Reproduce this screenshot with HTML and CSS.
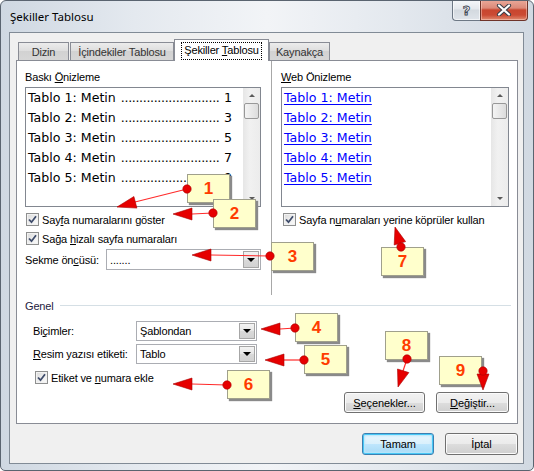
FILE: index.html
```html
<!DOCTYPE html>
<html lang="tr">
<head>
<meta charset="utf-8">
<title>Şekiller Tablosu</title>
<link rel="stylesheet" href="styles.css">
</head>
<body>
<div class="window">
  <div class="titlebar">
    <span class="title">Şekiller Tablosu</span>
    <div class="caption">
      <div class="cap-help">?</div>
      <div class="cap-close">
        <svg width="16" height="12" viewBox="0 0 16 12">
          <path d="M3 1.5 L13 10.5 M13 1.5 L3 10.5" stroke="#3a3f48" stroke-width="4.2" stroke-linecap="round" fill="none"/>
          <path d="M3 1.5 L13 10.5 M13 1.5 L3 10.5" stroke="#ffffff" stroke-width="2.2" stroke-linecap="round" fill="none"/>
        </svg>
      </div>
    </div>
  </div>

  <div class="client">
    <div class="tabs">
      <div class="tab t-dizin">Dizin</div>
      <div class="tab t-ic">İçindekiler Tablosu</div>
      <div class="tab t-sek active"><span class="focus">Şekiller <u>T</u>ablosu</span></div>
      <div class="tab t-kay">Kaynakça</div>
    </div>

    <div class="panel">
      <div class="previews">
        <div class="col col-left">
          <div class="label">Baskı <u>Ö</u>nizleme</div>
          <div class="listbox">
            <div class="items">
              <div class="item"><span>Tablo 1: Metin</span><span class="dots">...........................</span><span class="num">1</span></div>
              <div class="item"><span>Tablo 2: Metin</span><span class="dots">...........................</span><span class="num">3</span></div>
              <div class="item"><span>Tablo 3: Metin</span><span class="dots">...........................</span><span class="num">5</span></div>
              <div class="item"><span>Tablo 4: Metin</span><span class="dots">...........................</span><span class="num">7</span></div>
              <div class="item"><span>Tablo 5: Metin</span><span class="dots">...........................</span><span class="num">9</span></div>
            </div>
            <div class="scrollbar">
              <div class="sb-btn"><i class="tri-up"></i></div>
              <div class="sb-thumb"></div>
              <div class="sb-track"></div>
              <div class="sb-btn"><i class="tri-down"></i></div>
            </div>
          </div>
          <div class="check-row first">
            <span class="cb"><svg width="11" height="11" viewBox="0 0 11 11"><path d="M2 5.5 L4.5 8.2 L9 2.3" fill="none" stroke="#3f4c6b" stroke-width="1.8"/></svg></span>
            <span>Say<u>f</u>a numaralarını göster</span>
          </div>
          <div class="check-row">
            <span class="cb"><svg width="11" height="11" viewBox="0 0 11 11"><path d="M2 5.5 L4.5 8.2 L9 2.3" fill="none" stroke="#3f4c6b" stroke-width="1.8"/></svg></span>
            <span>Sağa <u>h</u>izalı sayfa numaraları</span>
          </div>
          <div class="sekme-row">
            <span>Sekme ön<u>c</u>üsü:</span>
            <div class="combo combo-sekme"><span class="combo-text">.......</span><span class="combo-btn"><i class="tri-down dark"></i></span></div>
          </div>
        </div>

        <div class="vsep"></div>

        <div class="col col-right">
          <div class="label"><u>W</u>eb Önizleme</div>
          <div class="listbox">
            <div class="items">
              <div class="item link">Tablo 1: Metin</div>
              <div class="item link">Tablo 2: Metin</div>
              <div class="item link">Tablo 3: Metin</div>
              <div class="item link">Tablo 4: Metin</div>
              <div class="item link">Tablo 5: Metin</div>
            </div>
            <div class="scrollbar">
              <div class="sb-btn"><i class="tri-up"></i></div>
              <div class="sb-thumb"></div>
              <div class="sb-track"></div>
              <div class="sb-btn"><i class="tri-down"></i></div>
            </div>
          </div>
          <div class="check-row first right">
            <span class="cb"><svg width="11" height="11" viewBox="0 0 11 11"><path d="M2 5.5 L4.5 8.2 L9 2.3" fill="none" stroke="#3f4c6b" stroke-width="1.8"/></svg></span>
            <span>Sayfa n<u>u</u>maraları yerine köprüler kullan</span>
          </div>
        </div>
      </div>

      <div class="genel">
        <div class="genel-head"><span class="genel-label">Genel</span><span class="genel-line"></span></div>
        <div class="field-row r1">
          <span class="lbl">Bi<u>ç</u>imler:</span>
          <div class="combo combo-gen"><span class="combo-text">Şablondan</span><span class="combo-btn"><i class="tri-down dark"></i></span></div>
        </div>
        <div class="field-row r2">
          <span class="lbl"><u>R</u>esim yazısı etiketi:</span>
          <div class="combo combo-gen"><span class="combo-text">Tablo</span><span class="combo-btn"><i class="tri-down dark"></i></span></div>
        </div>
        <div class="check-row etiket">
          <span class="cb"><svg width="11" height="11" viewBox="0 0 11 11"><path d="M2 5.5 L4.5 8.2 L9 2.3" fill="none" stroke="#3f4c6b" stroke-width="1.8"/></svg></span>
          <span>Etiket ve <u>n</u>umara ekle</span>
        </div>
        <div class="btn-row">
          <button class="btn b-secenek"><u>S</u>eçenekler...</button>
          <button class="btn b-degis"><u>D</u>eğiştir...</button>
        </div>
      </div>
    </div>

    <div class="footer">
      <button class="btn default b-tamam">Tamam</button>
      <button class="btn b-iptal">İptal</button>
    </div>
  </div>

  <div class="overlay">
    <div class="callout c1">1</div>
    <div class="callout c2">2</div>
    <div class="callout c3">3</div>
    <div class="callout c4">4</div>
    <div class="callout c5">5</div>
    <div class="callout c6">6</div>
    <div class="callout c7">7</div>
    <div class="callout c8">8</div>
    <div class="callout c9">9</div>
    <svg class="arrows" width="534" height="471" viewBox="0 0 534 471">
      <g stroke="#ff2a2a" stroke-width="1.2" fill="none">
        <line x1="187" y1="189" x2="135" y2="202"/>
        <line x1="213" y1="213" x2="192" y2="214"/>
        <line x1="270" y1="256" x2="211" y2="255"/>
        <line x1="295" y1="328" x2="280" y2="329"/>
        <line x1="304" y1="360" x2="284" y2="360"/>
        <line x1="227" y1="385" x2="192" y2="384"/>
        <line x1="407" y1="359" x2="403" y2="371"/>
      </g>
      <g fill="#e60000" stroke="#a80000" stroke-width="0.6">
        <polygon points="117,207 133.9,196.5 136.9,208.1"/>
        <polygon points="173,214 192,208 192,220"/>
        <polygon points="192,255 211,249 211,261"/>
        <polygon points="261,329 280,323 280,335"/>
        <polygon points="265,360 284,354 284,366"/>
        <polygon points="173,384 192,378 192,390"/>
        <polygon points="395,227 405.6,241.6 394.2,245"/>
        <polygon points="398,387 397.5,369 408.9,372.6"/>
        <polygon points="483,390 477,374 489,374"/>
        <circle cx="187" cy="189" r="4.2"/>
        <circle cx="213" cy="213" r="4.2"/>
        <circle cx="270" cy="256" r="4.2"/>
        <circle cx="295" cy="328" r="4.2"/>
        <circle cx="304" cy="360" r="4.2"/>
        <circle cx="227" cy="385" r="4.2"/>
        <circle cx="401" cy="247" r="4.2"/>
        <circle cx="407" cy="359" r="4.2"/>
        <circle cx="483" cy="371" r="4.2"/>
      </g>
    </svg>
  </div>
</div>
</body>
</html>
```

FILE: styles.css
```css
* { box-sizing: border-box; }
html, body { margin: 0; padding: 0; }
body {
  width: 534px;
  height: 471px;
  overflow: hidden;
  background: #ffffff;
  font-family: "Liberation Sans", Arial, sans-serif;
  font-size: 11px;
  letter-spacing: -0.15px;
  color: #000;
}
u { text-decoration: underline; text-underline-offset: 1px; }

.window {
  position: relative;
  width: 534px;
  height: 471px;
  border: 1px solid #5a6470;
  border-radius: 6px 6px 5px 5px;
  background: linear-gradient(to right, #cfd8e2 0%, #e4e9ef 25%, #f2f4f7 50%, #e3e8ee 75%, #d1d9e2 100%);
  overflow: hidden;
}

/* title bar */
.titlebar {
  height: 31px;
  display: flex;
  justify-content: space-between;
  align-items: flex-start;
}
.title {
  font-family: "Noto Sans", sans-serif;
  font-size: 11.5px;
  letter-spacing: 0;
  line-height: 16px;
  margin: 8px 0 0 9px;
  color: #000;
}
.caption {
  display: flex;
  margin-top: -1px;
  margin-right: 5px;
}
.cap-help {
  width: 28px;
  height: 21px;
  border: 1px solid #6d7885;
  border-top: none;
  border-right: none;
  border-radius: 0 0 0 4px;
  background: linear-gradient(#f6f8fa 0%, #e4e8ed 45%, #d3d9df 50%, #dfe4ea 100%);
  display: flex;
  align-items: center;
  justify-content: center;
  font-family: "DejaVu Sans", sans-serif;
  font-weight: bold;
  font-size: 13px;
  color: #ffffff;
  -webkit-text-stroke: 0.9px #3d4652;
  box-shadow: inset 0 0 0 1px rgba(255,255,255,0.6);
}
.cap-close {
  width: 48px;
  height: 21px;
  border: 1px solid #6e3329;
  border-top: none;
  border-radius: 0 0 4px 0;
  background: linear-gradient(#eaa99a 0%, #dc8a79 40%, #c8462f 50%, #cb4a33 75%, #e08b70 100%);
  display: flex;
  align-items: center;
  justify-content: center;
  box-shadow: inset 0 0 0 1px rgba(255,220,210,0.45);
}

/* client */
.client {
  margin-left: 8px;
  width: 515px;
  height: 432px;
  border: 1px solid #818b96;
  background: #f0f0f0;
  display: flex;
  flex-direction: column;
}

.tabs {
  height: 27px;
  display: flex;
  align-items: flex-end;
  padding-left: 8px;
}
.tab {
  height: 18px;
  border: 1px solid #898c95;
  border-bottom: none;
  background: linear-gradient(#ececec 0%, #dedede 45%, #d2d2d2 50%, #d6d6d6 100%);
  display: flex;
  align-items: center;
  justify-content: center;
  color: #333;
  white-space: nowrap;
}
.t-dizin { width: 51px; margin-right: 1px; }
.t-ic { width: 104px; }
.t-sek { width: 95px; }
.t-kay { width: 61px; }
.tab.active {
  height: 22px;
  margin-bottom: -1px;
  background: #ffffff;
  position: relative;
  z-index: 1;
  color: #000;
  align-items: flex-start;
  padding-top: 2px;
}
.focus {
  border: 1px dotted #000;
  padding: 1px 2px 2px 2px;
  line-height: 13px;
}

/* panel */
.panel {
  margin-left: 6px;
  width: 502px;
  height: 364px;
  border: 1px solid #898c95;
  background: #ffffff;
}
.previews {
  display: flex;
  height: 234px;
  padding-left: 8px;
}
.col { padding-top: 10px; display: flex; flex-direction: column; }
.col-left { width: 236px; }
.col-right { width: 228px; }
.vsep {
  width: 1px;
  background: #a8a8a8;
  margin: 0 9px 0 10px;
}
.label {
  height: 13px;
  line-height: 13px;
  margin-bottom: 3px;
}

.listbox {
  height: 120px;
  border: 1px solid #828790;
  display: flex;
  background: #ffffff;
}
.items {
  flex: 1;
  min-width: 0;
  padding: 0 11px 0 2px;
}
.item {
  display: flex;
  height: 20px;
  line-height: 19px;
  font-family: "DejaVu Sans", Verdana, sans-serif;
  font-size: 12.6px;
  letter-spacing: 0;
  white-space: nowrap;
  color: #000;
}
.dots {
  margin-left: 5px;
  letter-spacing: -0.35px;
}
.num { margin-left: auto; }
.item.link {
  color: #0000ff;
  text-decoration: underline;
  text-underline-offset: 2px;
}

.scrollbar {
  width: 17px;
  display: flex;
  flex-direction: column;
  background: linear-gradient(to right, #e6e6e6, #f1f1f1 40%, #ececec);
}
.sb-btn {
  height: 15px;
  display: flex;
  align-items: center;
  justify-content: center;
}
.sb-thumb {
  height: 16px;
  margin: 0 1px;
  border: 1px solid #989898;
  border-radius: 2px;
  background: linear-gradient(to right, #f4f4f4, #e8e8e8 50%, #dcdcdc);
}
.sb-track { flex: 1; }
.tri-up, .tri-down {
  display: block;
  width: 0;
  height: 0;
  border-left: 3px solid transparent;
  border-right: 3px solid transparent;
}
.tri-up { border-bottom: 3px solid #5a5a5a; }
.tri-down { border-top: 3px solid #5a5a5a; }
.tri-down.dark {
  border-left-width: 4px;
  border-right-width: 4px;
  border-top: 4px solid #000;
}

.check-row {
  display: flex;
  align-items: center;
  height: 19px;
  padding-left: 1px;
  white-space: nowrap;
}
.check-row.first { margin-top: 3px; }
.check-row.right { padding-left: 2px; }
.cb {
  width: 13px;
  height: 13px;
  margin-right: 3px;
  border: 1px solid #8e8f8f;
  background: linear-gradient(135deg, #d9d9d9 0%, #ededed 50%, #fbfbfb 100%);
  box-shadow: inset 0 0 0 1px #f2f2f2;
  display: flex;
  align-items: center;
  justify-content: center;
  flex: none;
}

.sekme-row {
  margin-top: 1px;
  height: 21px;
  display: flex;
  align-items: center;
  justify-content: space-between;
}

.combo {
  display: flex;
  align-items: stretch;
  border: 1px solid #abadb3;
  background: #ffffff;
}
.combo-sekme { width: 155px; height: 21px; }
.combo-gen { width: 121px; height: 20px; }
.combo-text {
  flex: 1;
  padding-left: 3px;
  display: flex;
  align-items: center;
}
.combo-btn {
  width: 16px;
  margin: 1px;
  border: 1px solid #a6a6a6;
  background: linear-gradient(#f3f3f3 0%, #e6e6e6 50%, #d9d9d9 51%, #d2d2d2 100%);
  display: flex;
  align-items: center;
  justify-content: center;
}

/* genel */
.genel {
  padding: 4px 6px 0 8px;
}
.genel-head {
  display: flex;
  align-items: center;
  height: 13px;
}
.genel-label { color: #1e2240; }
.genel-line {
  flex: 1;
  height: 1px;
  background: #d5dfe5;
  margin-left: 6px;
}
.field-row {
  display: flex;
  align-items: center;
  height: 20px;
  padding-left: 8px;
}
.field-row.r1 { margin-top: 9px; }
.field-row.r2 { margin-top: 3px; }
.lbl { width: 103px; white-space: nowrap; }
.check-row.etiket { margin-top: 4px; padding-left: 10px; }
.btn-row {
  margin-top: 5px;
  display: flex;
  justify-content: flex-end;
  gap: 11px;
  padding-right: 2px;
}

.btn {
  height: 21px;
  padding: 0;
  border: 1px solid #707070;
  border-radius: 3px;
  background: linear-gradient(#f2f2f2 0%, #ebebeb 50%, #dddddd 51%, #cfcfcf 100%);
  box-shadow: inset 0 0 0 1px #fbfbfb;
  font-family: "Liberation Sans", Arial, sans-serif;
  font-size: 11px;
  letter-spacing: -0.1px;
  color: #000;
}
.b-secenek { width: 81px; }
.b-degis { width: 73px; }

.footer {
  margin-top: 9px;
  display: flex;
  justify-content: flex-end;
  gap: 11px;
  padding-right: 5px;
}
.footer .btn { height: 22px; }
.b-tamam { width: 72px; }
.b-iptal { width: 73px; }
.btn.default {
  border-color: #3c7fb1;
  box-shadow: inset 0 0 0 1px #48c8f6, inset 0 0 2px 2px #b9e6fa;
  background: linear-gradient(#eaf6fd 0%, #d9f0fc 50%, #bee6fd 51%, #a7d9f5 100%);
}

/* annotation overlay */
.overlay {
  position: absolute;
  left: -1px;
  top: -1px;
  width: 534px;
  height: 471px;
  pointer-events: none;
}
.arrows { position: absolute; left: 0; top: 0; }
.callout {
  position: absolute;
  width: 43px;
  height: 29px;
  background: #ffffcc;
  border: 1px solid #a0a08c;
  box-shadow: 2px 2px 1px #8a8a8a;
  display: flex;
  align-items: center;
  justify-content: center;
  font-family: "Liberation Sans", Arial, sans-serif;
  font-weight: bold;
  font-size: 17px;
  letter-spacing: 0;
  color: #ff3c00;
}
.c1 { left: 187px; top: 174px; }
.c2 { left: 213px; top: 199px; }
.c3 { left: 271px; top: 242px; }
.c4 { left: 295px; top: 313px; }
.c5 { left: 304px; top: 345px; }
.c6 { left: 227px; top: 370px; }
.c7 { left: 381px; top: 247px; }
.c8 { left: 385px; top: 331px; }
.c9 { left: 439px; top: 356px; }
```
